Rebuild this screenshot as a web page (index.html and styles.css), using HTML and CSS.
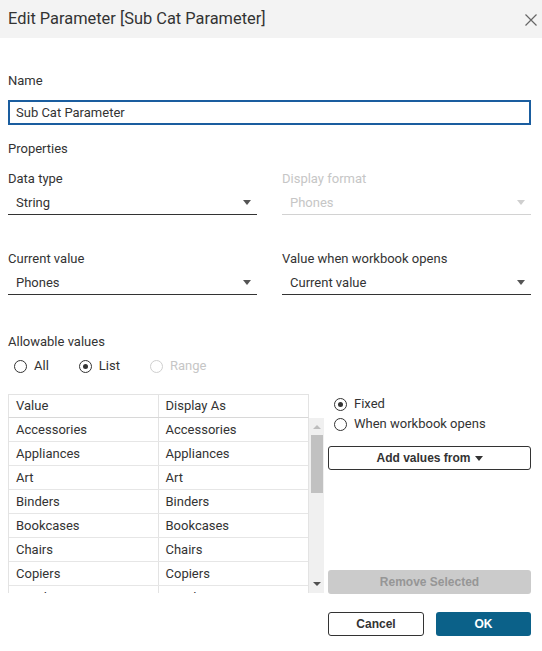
FILE: index.html
```html
<!DOCTYPE html>
<html>
<head>
<meta charset="utf-8">
<link rel="stylesheet" href="styles.css">
</head>
<body>
<div class="dialog">
  <header class="titlebar">
    <h1 class="title">Edit Parameter [Sub Cat Parameter]</h1>
    <span class="close"><svg width="12" height="12" viewBox="0 0 12 12"><path d="M0.5 0.5 L11.5 11.5 M11.5 0.5 L0.5 11.5" stroke="#666" stroke-width="1.2" fill="none"/></svg></span>
  </header>
  <main class="content">
    <div class="label name-label">Name</div>
    <div class="text-input">Sub Cat Parameter</div>
    <div class="label section-label">Properties</div>
    <div class="props">
      <div class="field">
        <div class="label">Data type</div>
        <div class="select"><span>String</span><span class="caret"></span></div>
      </div>
      <div class="field disabled">
        <div class="label">Display format</div>
        <div class="select"><span>Phones</span><span class="caret"></span></div>
      </div>
      <div class="field">
        <div class="label">Current value</div>
        <div class="select"><span>Phones</span><span class="caret"></span></div>
      </div>
      <div class="field">
        <div class="label">Value when workbook opens</div>
        <div class="select"><span>Current value</span><span class="caret"></span></div>
      </div>
    </div>
    <div class="label allow-label">Allowable values</div>
    <div class="radio-row">
      <span class="radio"><span class="circle"></span>All</span>
      <span class="radio checked"><span class="circle"></span>List</span>
      <span class="radio disabled"><span class="circle"></span>Range</span>
    </div>
    <div class="list-area">
      <div class="list">
        <div class="list-head">
          <div class="cell">Value</div>
          <div class="cell">Display As</div>
        </div>
        <div class="list-body">
          <div class="row"><div class="cell">Accessories</div><div class="cell">Accessories</div></div>
          <div class="row"><div class="cell">Appliances</div><div class="cell">Appliances</div></div>
          <div class="row"><div class="cell">Art</div><div class="cell">Art</div></div>
          <div class="row"><div class="cell">Binders</div><div class="cell">Binders</div></div>
          <div class="row"><div class="cell">Bookcases</div><div class="cell">Bookcases</div></div>
          <div class="row"><div class="cell">Chairs</div><div class="cell">Chairs</div></div>
          <div class="row"><div class="cell">Copiers</div><div class="cell">Copiers</div></div>
          <div class="row"><div class="cell">Envelopes</div><div class="cell">Envelopes</div></div>
        </div>
        <div class="scrollbar">
          <span class="arrow up"></span>
          <span class="thumb"></span>
          <span class="arrow down"></span>
        </div>
      </div>
      <div class="side">
        <span class="radio side-radio checked"><span class="circle"></span>Fixed</span>
        <span class="radio side-radio"><span class="circle"></span>When workbook opens</span>
        <button class="btn outline add-btn">Add values from <span class="btn-caret"></span></button>
        <button class="btn remove-btn">Remove Selected</button>
      </div>
    </div>
    <div class="footer">
      <button class="btn outline cancel">Cancel</button>
      <button class="btn primary ok">OK</button>
    </div>
  </main>
</div>
</body>
</html>
```

FILE: styles.css
```css
html, body {
  margin: 0;
  padding: 0;
  background: #ffffff;
}
body {
  font-family: Roboto, "Liberation Sans", sans-serif;
  font-size: 13px;
  color: #333333;
  width: 542px;
}
.titlebar {
  height: 38px;
  background: #f3f3f3;
  display: flex;
  align-items: center;
  justify-content: space-between;
  padding: 0 5px 0 8px;
  box-sizing: border-box;
}
.title {
  margin: 0;
  font-size: 16.4px;
  font-weight: 400;
  color: #333333;
  line-height: 20px;
}
.close {
  display: flex;
  width: 12px;
  height: 12px;
  margin-top: 2px;
}
.content {
  padding: 0 11px 0 8px;
}
.label {
  line-height: 16px;
  height: 16px;
}
.name-label {
  margin-top: 35px;
}
.text-input {
  margin-top: 11px;
  height: 25px;
  box-sizing: border-box;
  border: 2px solid #1a5d9f;
  padding-left: 6px;
  line-height: 21px;
}
.section-label {
  margin-top: 16px;
}
.props {
  margin-top: 14px;
  display: grid;
  grid-template-columns: 249px 249px;
  column-gap: 25px;
  row-gap: 36px;
}
.select {
  margin-top: 4px;
  height: 24px;
  box-sizing: border-box;
  border-bottom: 1px solid #333333;
  display: flex;
  align-items: center;
  justify-content: space-between;
  padding: 0 6px 1px 8px;
}
.caret {
  width: 0;
  height: 0;
  border-left: 4px solid transparent;
  border-right: 4px solid transparent;
  border-top: 5px solid #555555;
}
.field.disabled {
  color: #c6c6c6;
}
.field.disabled .select {
  border-bottom-color: #d2d2d2;
}
.field.disabled .caret {
  border-top-color: #cfcfcf;
}
.allow-label {
  margin-top: 39px;
}
.radio-row {
  margin-top: 8px;
  height: 16px;
  display: flex;
  align-items: center;
  padding-left: 6px;
  gap: 30px;
}
.radio {
  display: flex;
  align-items: center;
  gap: 7px;
  line-height: 16px;
}
.circle {
  width: 13px;
  height: 13px;
  box-sizing: border-box;
  border: 1px solid #333333;
  border-radius: 50%;
  display: flex;
  align-items: center;
  justify-content: center;
  background: #fff;
}
.radio.checked .circle::after {
  content: "";
  width: 5px;
  height: 5px;
  border-radius: 50%;
  background: #333333;
}
.radio.disabled {
  color: #c6c6c6;
}
.radio.disabled .circle {
  border-color: #cfcfcf;
}
.list-area {
  margin-top: 20px;
  display: grid;
  grid-template-columns: 316px 203px;
  column-gap: 4px;
}
.list {
  display: grid;
  grid-template-columns: 301px 15px;
  grid-template-rows: 24px 175px;
}
.list-head {
  grid-column: 1;
  grid-row: 1;
  display: flex;
  box-sizing: border-box;
  border: 1px solid #e3e3e3;
  border-bottom: 1px solid #d8d8d8;
}
.list-body {
  grid-column: 1;
  grid-row: 2;
  overflow: hidden;
  box-sizing: border-box;
  border-left: 1px solid #e3e3e3;
  border-right: 1px solid #e3e3e3;
}
.row {
  display: flex;
  height: 24px;
  box-sizing: border-box;
  border-bottom: 1px solid #e6e6e6;
}
.cell {
  width: 150px;
  box-sizing: border-box;
  padding-left: 7px;
  line-height: 23px;
  white-space: nowrap;
}
.cell:first-child {
  border-right: 1px solid #e3e3e3;
}
.list-head .cell {
  line-height: 22px;
}
.scrollbar {
  grid-column: 2;
  grid-row: 2;
  background: #f0f0f0;
  display: flex;
  flex-direction: column;
  align-items: center;
}
.arrow {
  width: 0;
  height: 0;
  border-left: 4px solid transparent;
  border-right: 4px solid transparent;
}
.arrow.up {
  margin-top: 7px;
  border-bottom: 4px solid #bdbdbd;
}
.thumb {
  margin-top: 6px;
  width: 12px;
  height: 58px;
  background: #c1c1c1;
}
.arrow.down {
  margin-top: auto;
  margin-bottom: 7px;
  border-top: 4px solid #505050;
}
.side {
  display: flex;
  flex-direction: column;
  align-items: flex-start;
  height: 200px;
}
.side-radio {
  height: 20px;
  padding-left: 6px;
}
.btn {
  font-family: "Liberation Sans", Arial, sans-serif;
  font-size: 12px;
  font-weight: 700;
  height: 24px;
  box-sizing: border-box;
  border-radius: 3px;
  padding: 0;
  display: flex;
  align-items: center;
  justify-content: center;
  cursor: pointer;
}
.btn.outline {
  background: #ffffff;
  border: 1px solid #333333;
  color: #333333;
}
.add-btn {
  margin-top: 12px;
  width: 203px;
  gap: 4px;
}
.btn-caret {
  width: 0;
  height: 0;
  border-left: 4px solid transparent;
  border-right: 4px solid transparent;
  border-top: 5px solid #333333;
}
.remove-btn {
  margin-top: auto;
  width: 203px;
  background: #cbcbcb;
  border: none;
  color: #969696;
}
.footer {
  margin-top: 18px;
  display: flex;
  justify-content: flex-end;
  gap: 12px;
}
.cancel {
  width: 96px;
}
.primary {
  background: #0b6189;
  border: none;
  color: #ffffff;
}
.ok {
  width: 95px;
}
```
